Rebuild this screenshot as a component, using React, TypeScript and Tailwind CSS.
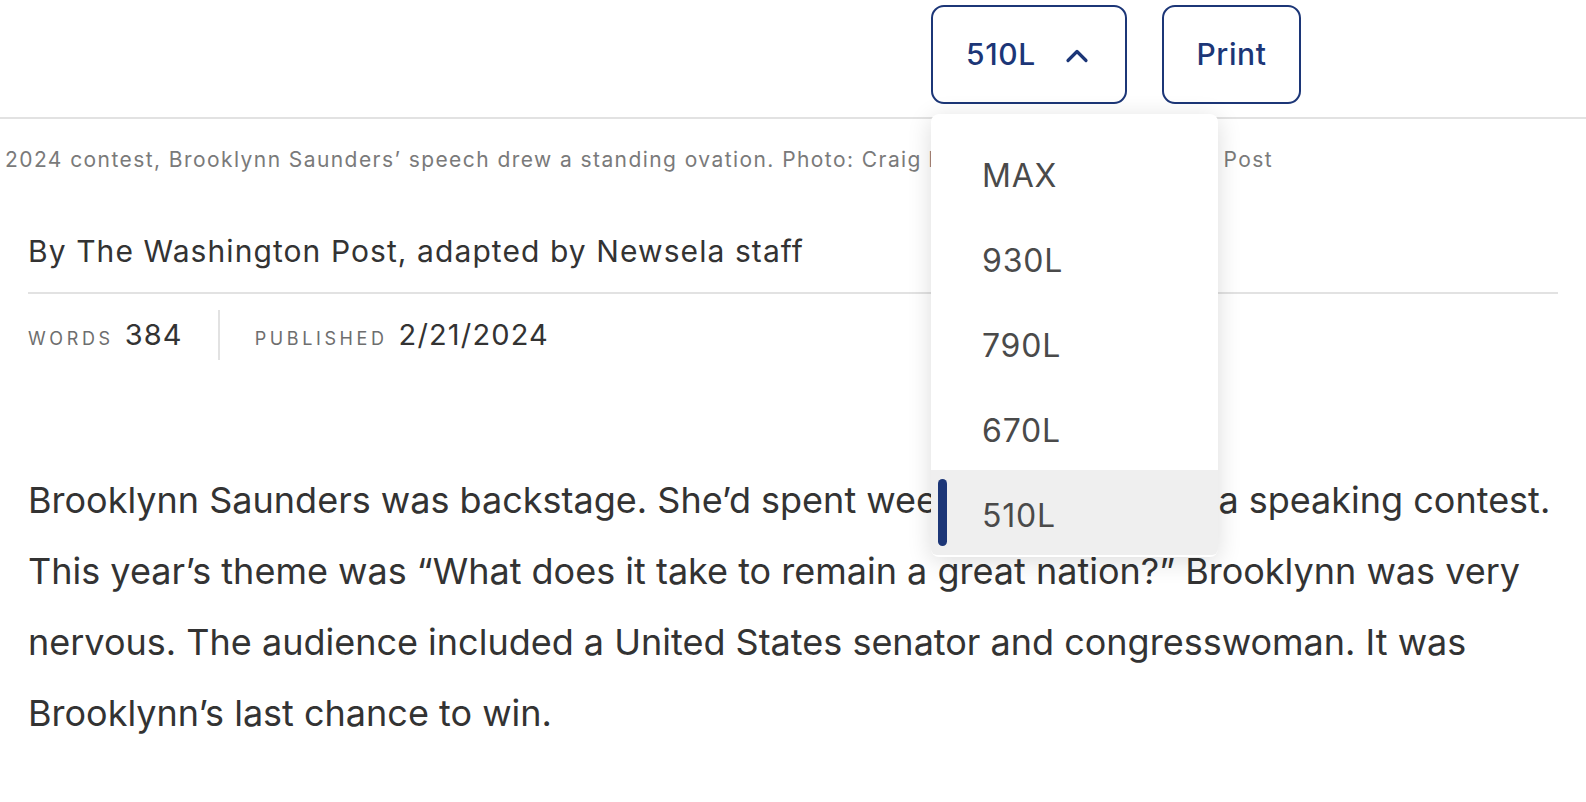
import React from 'react';

const levels = ['MAX', '930L', '790L', '670L', '510L'];

const ChevronUp = () => (
  <svg width="24" height="16" viewBox="0 0 24 16" fill="none" className="ml-[29px]">
    <path d="M3 13.5L12 4.5L21 13.5" stroke="#1c3677" strokeWidth="3.2" strokeLinecap="round" strokeLinejoin="round" />
  </svg>
);

const LevelMenu = () => (
  <div className="absolute left-[931px] top-[114px] w-[287px] rounded-[8px] bg-white pt-[16px] pb-[2px] shadow-[0_4px_24px_rgba(0,0,0,0.14)]">
    {levels.map((level) => {
      const active = level === '510L';
      return (
        <div
          key={level}
          className={`relative flex h-[85px] items-center pt-[7px] pl-[51px] text-[32px] tracking-[0.025em] text-[#4a4a4a] ${active ? 'bg-[#efefef] rounded-b-[6px]' : ''}`}
        >
          {active && <span className="absolute left-[7px] top-[9px] h-[67px] w-[9px] rounded-full bg-[#1c3677]" />}
          {level}
        </div>
      );
    })}
  </div>
);

const App = () => {
  return (
    <div className="relative min-h-screen bg-white font-['Inter',sans-serif] text-[#333333]">
      <div className="flex h-[119px] items-start border-b-2 border-[#e2e2e2] pt-[5px] pl-[931px]">
        <button className="flex h-[99px] w-[196px] items-center rounded-[13px] border-2 border-[#1c3677] pl-[33px] text-[30px] font-medium tracking-[0.02em] text-[#1c3677]">
          510L
          <ChevronUp />
        </button>
        <button className="ml-[35px] flex h-[99px] w-[139px] items-center justify-center rounded-[13px] border-2 border-[#1c3677] text-[30px] font-medium tracking-[0.02em] text-[#1c3677]">
          Print
        </button>
      </div>

      <p className="mt-[25px] whitespace-nowrap pl-[5px] text-[21px] tracking-[0.068em] text-[#7a7a7a]">
        2024 contest, Brooklynn Saunders’ speech drew a standing ovation. Photo: Craig
        <span className="tracking-[0.02em]"> Hudson for The Washington</span> Post
      </p>

      <div className="px-[28px]">
        <div className="mt-[53px] w-[1530px] border-b-2 border-[#e2e2e2] pb-[18px] text-[30px] tracking-[0.036em]">
          By The Washington Post, adapted by Newsela staff
        </div>

        <div className="mt-[16px] flex h-[50px] items-center">
          <div className="flex items-baseline gap-[11px] pr-[35px]">
            <span className="text-[18px] uppercase tracking-[0.2em] text-[#6e6e6e]">Words</span>
            <span className="text-[29px] tracking-[0.04em]">384</span>
          </div>
          <div className="h-[50px] w-[2px] bg-[#e2e2e2]" />
          <div className="flex items-baseline gap-[11px] pl-[35px]">
            <span className="text-[18px] uppercase tracking-[0.2em] text-[#6e6e6e]">Published</span>
            <span className="text-[29px] tracking-[0.04em]">2/21/2024</span>
          </div>
        </div>

        <div className="mt-[105px] text-[36px] leading-[71px]">
          <div className="whitespace-nowrap">Brooklynn Saunders was backstage. She’d spent weeks preparing for a speaking contest.</div>
          <div className="whitespace-nowrap">This year’s theme was “What does it take to remain a great nation?” Brooklynn was very</div>
          <div className="whitespace-nowrap">nervous. The audience included a United States senator and congresswoman. It was</div>
          <div className="whitespace-nowrap">Brooklynn’s last chance to win.</div>
        </div>
      </div>

      <LevelMenu />
    </div>
  );
};

export default App;
